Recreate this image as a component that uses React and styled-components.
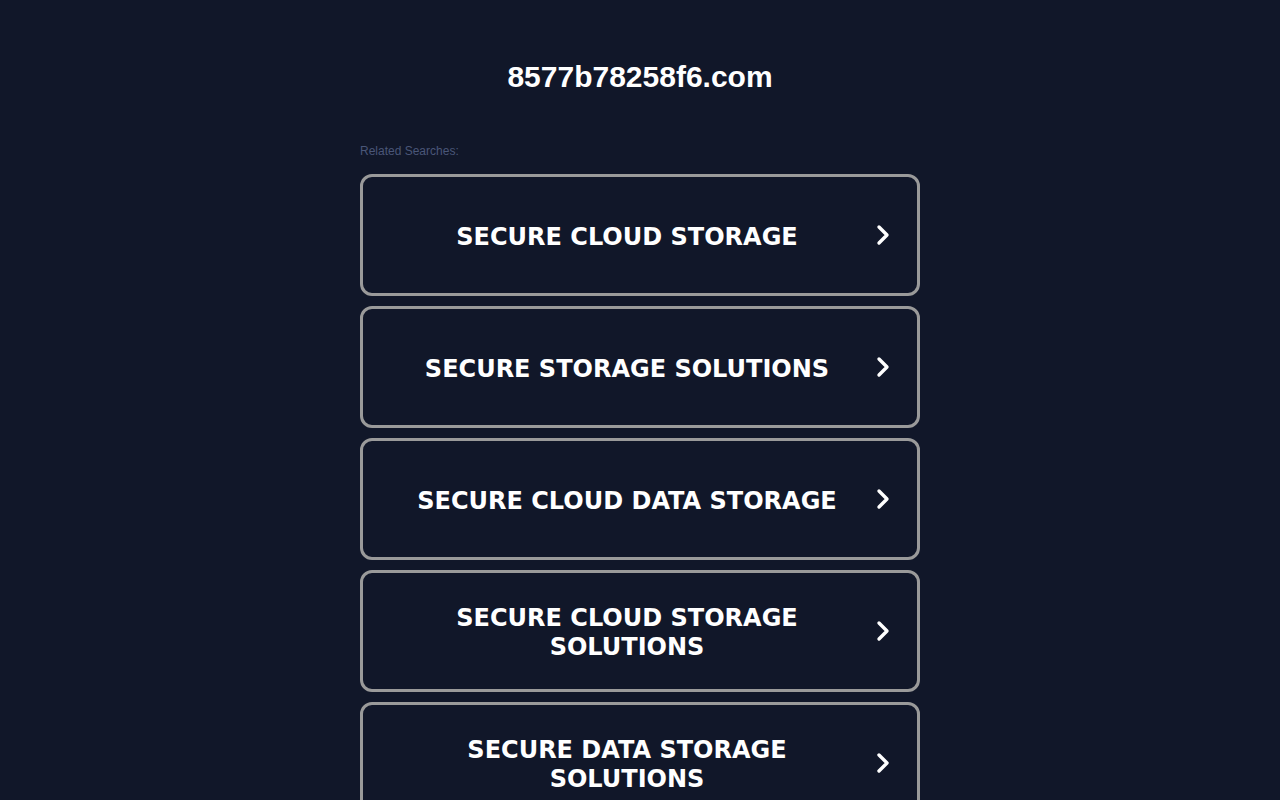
import React from "react";
import styled, { createGlobalStyle } from "styled-components";

const searches = [
  "Secure Cloud Storage",
  "Secure Storage Solutions",
  "Secure Cloud Data Storage",
  "Secure Cloud Storage Solutions",
  "Secure Data Storage Solutions",
];

const App = () => {
  return (
    <Page>
      <GlobalStyle />
      <Domain>8577b78258f6.com</Domain>
      <Wrap>
        <Label>Related Searches:</Label>
        <List>
          {searches.map((s, i) => (
            <SearchLink key={i} href="#">
              <LinkText>{s}</LinkText>
              <Arrow viewBox="0 0 16 24">
                <path
                  d="M4 4 L12 12 L4 20"
                  fill="none"
                  stroke="#fff"
                  strokeWidth="3.4"
                  strokeLinecap="round"
                  strokeLinejoin="round"
                />
              </Arrow>
            </SearchLink>
          ))}
        </List>
      </Wrap>
    </Page>
  );
};

export default App;

// styles
const GlobalStyle = createGlobalStyle`
  html, body {
    margin: 0;
    padding: 0;
    background: #111729;
  }
`;

const Page = styled.div`
  min-height: 800px;
  background: #111729;
  font-family: "Liberation Sans", Arial, sans-serif;
  display: flex;
  flex-direction: column;
  align-items: center;
  padding-top: 59px;
  box-sizing: border-box;
`;

const Domain = styled.h1`
  margin: 0;
  font-size: 30px;
  line-height: 36px;
  font-weight: bold;
  color: #fff;
`;

const Wrap = styled.div`
  width: 560px;
  margin-top: 49px;
`;

const Label = styled.div`
  font-size: 12px;
  line-height: 14px;
  color: #4a5678;
`;

const List = styled.div`
  display: flex;
  flex-direction: column;
  gap: 10px;
  margin-top: 16px;
`;

const SearchLink = styled.a`
  display: flex;
  align-items: center;
  height: 122px;
  box-sizing: border-box;
  border: 3px solid #9a9a9a;
  border-radius: 12px;
  padding: 0 26px 0 36px;
  text-decoration: none;
`;

const LinkText = styled.span`
  flex: 1;
  text-align: center;
  color: #fff;
  font-family: "DejaVu Sans", Verdana, sans-serif;
  font-weight: bold;
  font-size: 24px;
  line-height: 29px;
  text-transform: uppercase;
  padding: 4px 20px 0 0;
`;

const Arrow = styled.svg`
  width: 16px;
  height: 24px;
  flex-shrink: 0;
`;
